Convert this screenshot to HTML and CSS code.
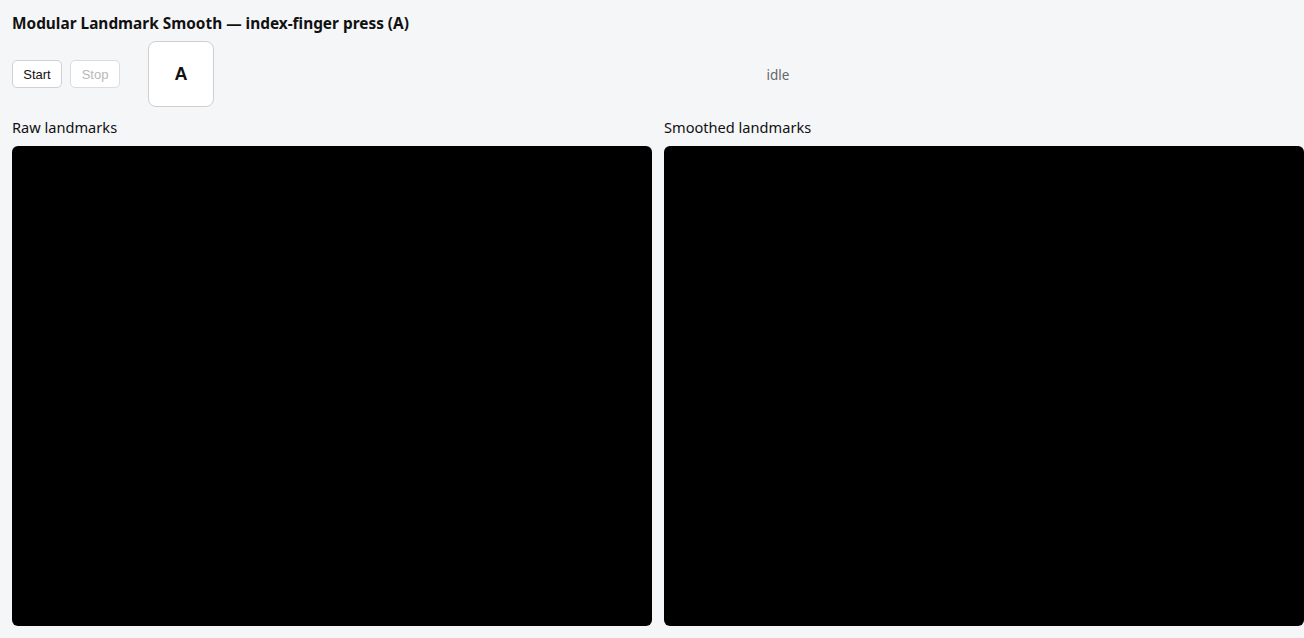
FILE: index.html
```html
<!DOCTYPE html>
<html>
<head>
<meta charset="utf-8">
<link rel="stylesheet" href="styles.css">
</head>
<body>
<div class="page">
  <h1 class="title">Modular Landmark Smooth — index-finger press (A)</h1>
  <div class="controls">
    <button class="btn">Start</button>
    <button class="btn" disabled>Stop</button>
    <div class="key">A</div>
    <div class="status">idle</div>
  </div>
  <div class="views">
    <div class="view">
      <div class="label">Raw landmarks</div>
      <div class="canvas"></div>
    </div>
    <div class="view">
      <div class="label">Smoothed landmarks</div>
      <div class="canvas"></div>
    </div>
  </div>
</div>
</body>
</html>
```
FILE: styles.css
```css
html, body {
  margin: 0;
  padding: 0;
  background: #f5f6f8;
  overflow: hidden;
}
.page {
  padding: 12px;
  font-family: "Noto Sans", "Open Sans", sans-serif;
  color: #111;
  width: 1304px;
  box-sizing: border-box;
}
.title {
  margin: 1px 0 0;
  font-size: 15.4px;
  font-weight: 700;
  line-height: 22px;
  height: 22px;
}
.controls {
  margin-top: 6px;
  display: flex;
  align-items: center;
  height: 66px;
}
.btn {
  font-family: "Liberation Sans", Arial, sans-serif;
  font-size: 13px;
  height: 28px;
  padding: 0 10px;
  min-width: 50px;
  background: #fff;
  border: 1px solid #d0d0d0;
  border-radius: 5px;
  color: #111;
  margin-right: 8px;
}
.btn:disabled {
  color: #b8b8b8;
  border-color: #dcdcdc;
}
.key {
  margin-left: 20px;
  width: 66px;
  height: 66px;
  box-sizing: border-box;
  border: 1px solid #cfcfcf;
  border-radius: 8px;
  background: #fff;
  display: flex;
  align-items: center;
  justify-content: center;
  font-family: "Liberation Sans", Arial, sans-serif;
  font-weight: 700;
  font-size: 18px;
  color: #111;
}
.status {
  flex: 1;
  text-align: center;
  font-size: 13.5px;
  color: #666;
  padding-left: 50px;
  padding-top: 2px;
}
.views {
  margin-top: 12px;
  display: flex;
  gap: 12px;
  width: 1292px;
}
.view {
  display: flex;
  flex-direction: column;
  gap: 10px;
}
.label {
  font-size: 14.6px;
  line-height: 17px;
  color: #111;
}
.canvas {
  width: 640px;
  height: 480px;
  background: #000;
  border-radius: 6px;
}
```
